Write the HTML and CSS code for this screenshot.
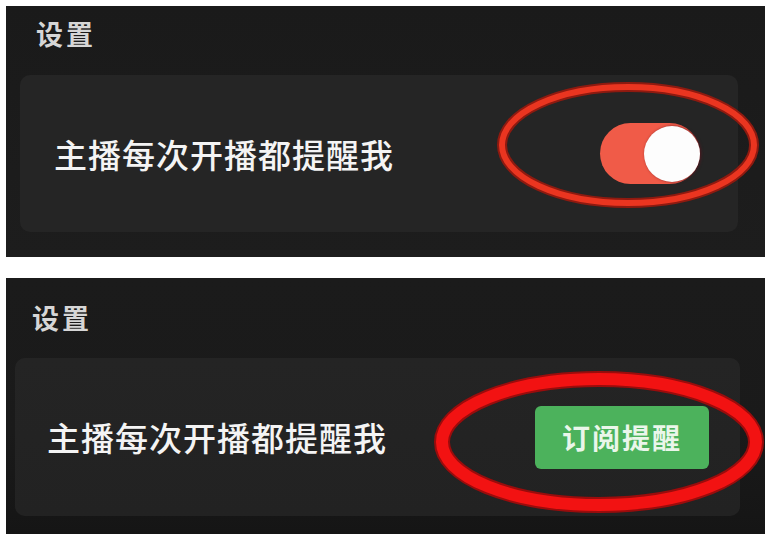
FILE: index.html
```html
<!DOCTYPE html>
<html lang="zh-CN">
<head>
<meta charset="utf-8">
<title>设置</title>
<link rel="stylesheet" href="styles.css">
</head>
<body>
<div class="page">
  <section class="panel panel-top">
    <div class="title">设置</div>
    <div class="card">
      <div class="label">主播每次开播都提醒我</div>
      <div class="toggle"><span class="knob"></span></div>
    </div>
    <svg class="mark" viewBox="0 0 759 251" width="759" height="251">
      <ellipse cx="622" cy="139" rx="126" ry="58" fill="none" stroke="#8e1a10" stroke-width="10"/>
      <ellipse cx="622" cy="139" rx="126" ry="58" fill="none" stroke="#ea3520" stroke-width="6"/>
    </svg>
  </section>
  <section class="panel panel-bottom">
    <div class="title">设置</div>
    <div class="card">
      <div class="label">主播每次开播都提醒我</div>
      <div class="btn">订阅提醒</div>
    </div>
    <svg class="mark" viewBox="0 0 759 256" width="759" height="256">
      <ellipse cx="593" cy="164" rx="157" ry="63" fill="none" stroke="#9a0c0c" stroke-width="16"/>
      <ellipse cx="593" cy="164" rx="157" ry="63" fill="none" stroke="#f21212" stroke-width="12"/>
    </svg>
  </section>
</div>
</body>
</html>
```
FILE: styles.css
```css
html, body {
  margin: 0;
  padding: 0;
  background: #ffffff;
}

.page {
  display: flex;
  flex-direction: column;
  gap: 21px;
  padding: 6px 5px 0 6px;
  width: 759px;
  font-family: "Noto Sans CJK SC", "Noto Sans", sans-serif;
}

.panel {
  position: relative;
  display: flex;
  flex-direction: column;
  background: #1b1b1b;
  overflow: hidden;
}

.panel-top {
  height: 251px;
  background: linear-gradient(#1a1a1a, #1d1d1d);
}

.panel-bottom {
  height: 256px;
  background: linear-gradient(#1b1b1b, #1a1a1a 60%, #151515);
}

.title {
  color: #d6d6d6;
  font-size: 27px;
  line-height: 30px;
  height: 30px;
  letter-spacing: 3px;
  font-weight: 700;
}

.panel-top .title {
  padding: 13px 0 0 30px;
}

.panel-bottom .title {
  padding: 25px 0 0 26px;
}

.card {
  display: flex;
  align-items: center;
  justify-content: space-between;
  background: #252525;
  border-radius: 10px;
}

.panel-top .card {
  margin: 26px 27px 0 14px;
  height: 157px;
  padding: 0 38px 0 34px;
}

.panel-bottom .card {
  margin: 25px 25px 0 9px;
  height: 158px;
  padding: 0 31px 0 32px;
  background: linear-gradient(#242424, #222222);
}

.label {
  color: #f4f4f4;
  font-size: 33px;
  letter-spacing: 1px;
  font-weight: 500;
  line-height: 40px;
}

.toggle {
  width: 100px;
  height: 61px;
  border-radius: 31px;
  background: #f05b48;
  display: flex;
  align-items: center;
  justify-content: flex-end;
}

.knob {
  width: 56px;
  height: 56px;
  border-radius: 50%;
  background: #fdfdfd;
  box-shadow: 1px 0 3px rgba(90, 20, 30, 0.8);
}

.btn {
  width: 174px;
  height: 63px;
  border-radius: 6px;
  background: #4cb25c;
  color: #eaf6ea;
  font-size: 28px;
  font-weight: 700;
  letter-spacing: 2px;
  display: flex;
  align-items: center;
  justify-content: center;
}

.mark {
  position: absolute;
  left: 0;
  top: 0;
  pointer-events: none;
}
```
